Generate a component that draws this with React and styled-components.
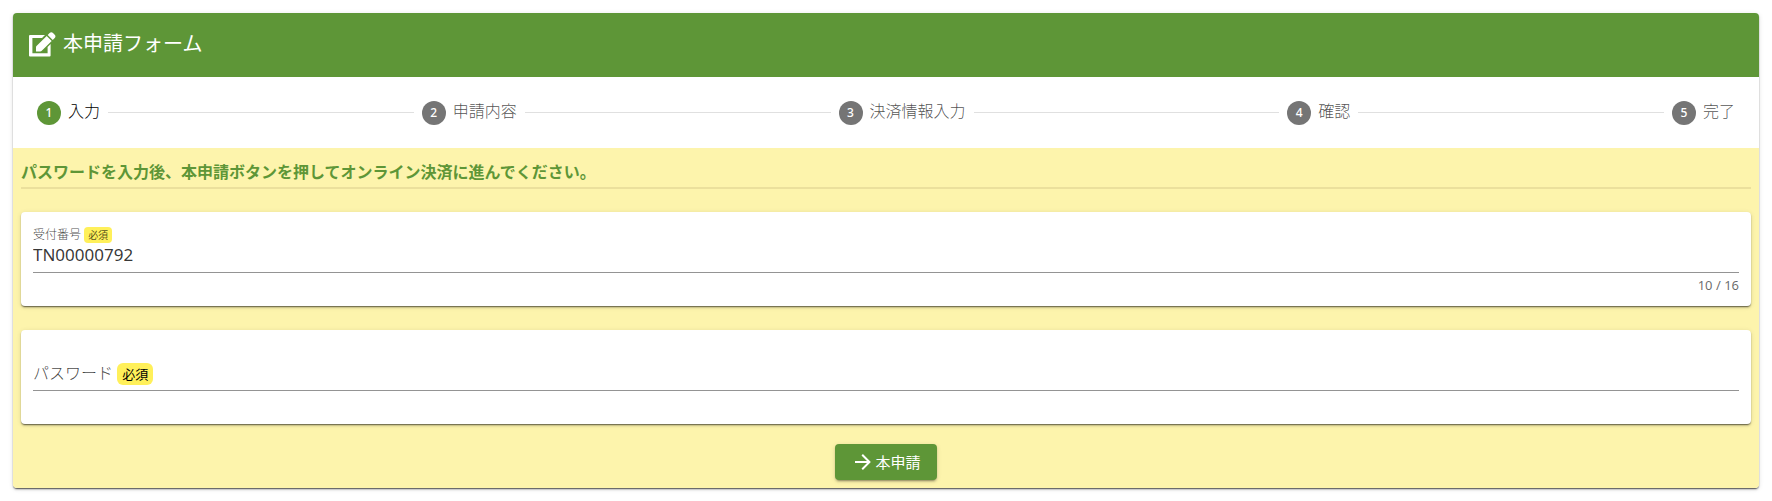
import React, { useState } from "react";
import styled, { createGlobalStyle } from "styled-components";

const steps = ["入力", "申請内容", "決済情報入力", "確認", "完了"];

const EditIcon = () => (
  <svg width="28" height="28" viewBox="0 0 28 28" fill="#fff" aria-hidden="true">
    <path d="M1 4H16l-3 3H3.4v15.2h15.2V16l3-3v11.5a1 1 0 0 1-1 1H1a1 1 0 0 1-1-1V5a1 1 0 0 1 1-1z" />
    <path d="M7 20.5v-4.2c0-.5.2-.9.5-1.2L17.7 4.9l5 5L12.5 20.1c-.3.3-.7.4-1.2.4z" />
    <path d="M18.7 3.9l1.9-1.9c1-1 2.4-1 3.4 0l1.7 1.7c1 1 1 2.4 0 3.4l-1.9 1.9z" />
  </svg>
);

const ArrowIcon = () => (
  <svg width="24" height="24" viewBox="0 0 24 24" fill="#fff" aria-hidden="true">
    <path d="M4 11v2h12l-5.5 5.5 1.42 1.42L19.84 12l-7.92-7.92L10.5 5.5 16 11H4z" />
  </svg>
);

const App = () => {
  const [number, setNumber] = useState("TN00000792");
  const [password, setPassword] = useState("");

  return (
    <Page>
      <GlobalStyle />
      <Panel>
        <Header>
          <EditIcon />
          <h1>本申請フォーム</h1>
        </Header>
        <Stepper>
          {steps.map((step, i) => (
            <React.Fragment key={step}>
              {i > 0 && <Line />}
              <Step $active={i === 0}>
                <span className="num">{i + 1}</span>
                <span className="name">{step}</span>
              </Step>
            </React.Fragment>
          ))}
        </Stepper>
        <Body>
          <Message>
            パスワードを入力後、本申請ボタンを押してオンライン決済に進んでください。
          </Message>
          <Form onSubmit={(e) => e.preventDefault()}>
            <Card>
              <Label htmlFor="number" $small>
                受付番号 <Required $small>必須</Required>
              </Label>
              <Input
                id="number"
                maxLength={16}
                value={number}
                onChange={(e) => setNumber(e.target.value)}
              />
              <Counter>{number.length} / 16</Counter>
            </Card>
            <Card>
              <Field>
                <Label htmlFor="password">
                  パスワード <Required>必須</Required>
                </Label>
                <Input
                  id="password"
                  type="password"
                  className="fill"
                  value={password}
                  onChange={(e) => setPassword(e.target.value)}
                />
              </Field>
            </Card>
            <Submit type="submit">
              <ArrowIcon />
              <span>本申請</span>
            </Submit>
          </Form>
        </Body>
      </Panel>
    </Page>
  );
};

const GlobalStyle = createGlobalStyle`
  * {
    box-sizing: border-box;
  }
  body {
    margin: 0;
    background-color: #fff;
    font-family: "Noto Sans", "Noto Sans CJK JP", sans-serif;
    font-size: 16px;
    font-weight: 300;
    color: rgba(0, 0, 0, 0.87);
  }
`;

const Page = styled.main`
  padding: 13px;
`;

const Panel = styled.section`
  border-radius: 4px;
  background-color: #fff;
  box-shadow: 0 3px 1px -2px rgba(0, 0, 0, 0.2), 0 2px 2px rgba(0, 0, 0, 0.14),
    0 1px 5px rgba(0, 0, 0, 0.12), 0 1px 1px rgba(0, 0, 0, 0.4);
`;

const Header = styled.header`
  height: 64px;
  padding: 0 16px;
  display: flex;
  align-items: center;
  gap: 6px;
  border-radius: 4px 4px 0 0;
  background-color: #5e9637;
  color: #fff;

  h1 {
    margin: 0;
    padding-bottom: 2px;
    font-size: 20px;
    line-height: 28px;
    font-weight: 400;
  }
`;

const Stepper = styled.div`
  height: 71px;
  padding: 0 24px;
  display: flex;
  align-items: center;
  gap: 8px;
`;

const Step = styled.div`
  display: flex;
  align-items: center;
  gap: 7px;
  line-height: 24px;
  color: ${({ $active }) => ($active ? "#000" : "rgba(0, 0, 0, 0.7)")};

  .num {
    width: 24px;
    height: 24px;
    border-radius: 50%;
    background-color: ${({ $active }) => ($active ? "#5e9637" : "#757575")};
    color: #fff;
    font-size: 12px;
    font-weight: 500;
    text-align: center;
  }

  .name {
    padding-bottom: 4px;
  }
`;

const Line = styled.div`
  flex: 1;
  height: 1px;
  background-color: #e0e0e0;
`;

const Body = styled.div`
  padding: 8px;
  border-radius: 0 0 4px 4px;
  background-color: #fdf4ac;
`;

const Message = styled.h2`
  margin: 0 0 23px;
  padding: 4px 0 3px;
  border-bottom: 2px solid #ebe09c;
  color: #5e9637;
  font-size: 16px;
  line-height: 24px;
  font-weight: 700;
`;

const Form = styled.form`
  display: flex;
  flex-direction: column;
  gap: 24px;
`;

const Card = styled.div`
  height: 94px;
  padding: 12px;
  display: flex;
  flex-direction: column;
  border-radius: 4px;
  background-color: #fff;
  box-shadow: 0 3px 1px -2px rgba(0, 0, 0, 0.2), 0 2px 2px rgba(0, 0, 0, 0.14),
    0 1px 5px rgba(0, 0, 0, 0.12), 0 1px 1px rgba(0, 0, 0, 0.3);
`;

const Label = styled.label`
  flex-shrink: 0;
  padding-top: ${({ $small }) => ($small ? "1px" : "0")};
  color: rgba(0, 0, 0, 0.75);
  font-size: ${({ $small }) => ($small ? "12px" : "16px")};
  line-height: ${({ $small }) => ($small ? "20px" : "24px")};
`;

const Required = styled.span`
  display: inline-block;
  padding: ${({ $small }) => ($small ? "0 4px" : "1px 5px")};
  border-radius: ${({ $small }) => ($small ? "4px" : "6px")};
  background-color: #fff05a;
  color: ${({ $small }) => ($small ? "rgba(0, 0, 0, 0.7)" : "#000")};
  font-size: ${({ $small }) => ($small ? "10px" : "13px")};
  line-height: ${({ $small }) => ($small ? "16px" : "20px")};
  font-weight: 400;
`;

const Field = styled.div`
  height: 49px;
  padding-top: 14px;
  display: flex;
  align-items: center;
  gap: 8px;
  border-bottom: 1px solid #949494;
`;

const Input = styled.input`
  width: 100%;
  height: 28px;
  padding: 0 0 8px;
  border: 0;
  border-bottom: 1px solid #949494;
  outline: none;
  background: transparent;
  color: rgba(0, 0, 0, 0.8);
  font-family: inherit;
  font-size: 17px;
  font-weight: 400;

  &.fill {
    flex: 1;
    border-bottom: 0;
  }
`;

const Counter = styled.div`
  margin-top: 4px;
  color: rgba(0, 0, 0, 0.6);
  font-size: 13px;
  line-height: 16px;
  font-weight: 400;
  text-align: right;
`;

const Submit = styled.button`
  height: 36px;
  margin-top: -4px;
  padding: 0 16px;
  align-self: center;
  display: flex;
  align-items: center;
  border: 0;
  border-radius: 4px;
  background-color: #5e9637;
  box-shadow: 0 3px 1px -2px rgba(0, 0, 0, 0.2), 0 2px 2px rgba(0, 0, 0, 0.14),
    0 1px 5px rgba(0, 0, 0, 0.12);
  color: #fff;
  font-family: inherit;
  font-size: 15px;
  font-weight: 400;
  cursor: pointer;

  span {
    padding-bottom: 2px;
  }
`;

export default App;
